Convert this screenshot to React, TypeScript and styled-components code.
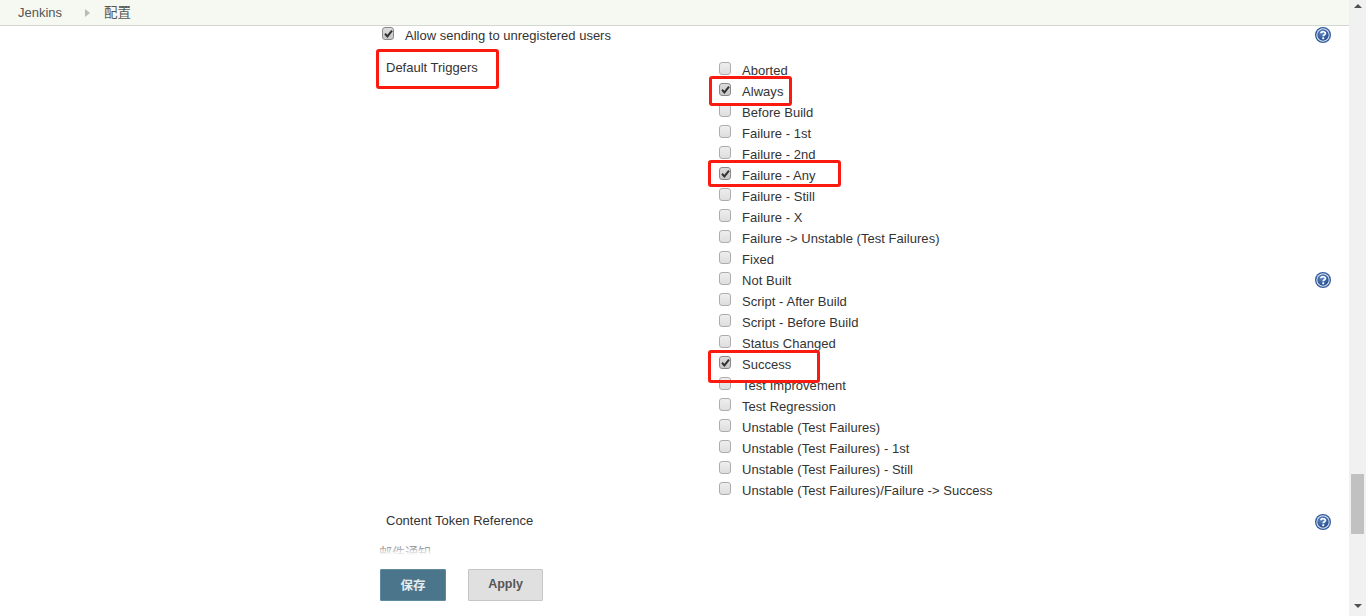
import React from "react";
import styled, { createGlobalStyle } from "styled-components";

const Global = createGlobalStyle`
  html, body { margin: 0; padding: 0; height: 100%; overflow: hidden; background: #fff; }
  body { font-family: "Liberation Sans", Arial, "Noto Sans CJK SC", sans-serif; font-size: 13px; color: #333; }
`;

const Shell = styled.div`
  display: flex;
  width: 1366px;
  height: 616px;
  overflow: hidden;
  position: relative;
`;
const Main = styled.div`
  flex: 1;
  display: flex;
  flex-direction: column;
  position: relative;
  min-width: 0;
`;
const TopBar = styled.header`
  height: 25px;
  flex: none;
  display: flex;
  align-items: center;
  padding-left: 18px;
  background: #f6f9f2;
  border-bottom: 1px solid #d3d7cf;
  color: #555;
`;
const Crumb = styled.span<{ $size?: number }>`
  font-size: ${(p) => p.$size ?? 13}px;
  line-height: 25px;
`;
const CrumbArrow = styled.span`
  width: 0;
  height: 0;
  margin: 0 14px 0 23px;
  border-left: 5px solid #b8bcb4;
  border-top: 4px solid transparent;
  border-bottom: 4px solid transparent;
`;
const Form = styled.form`
  display: flex;
  flex-direction: column;
  padding: 0 18px 0 380px;
  margin: 0;
`;
const AllowRow = styled.div`
  display: flex;
  align-items: center;
  height: 18px;
  padding-left: 2px;
  margin-bottom: 16px;
  line-height: 18px;
`;
const AllowText = styled.span`
  flex: 1;
  margin-left: 11px;
  padding-top: 2px;
`;
const TriggerSection = styled.div`
  display: grid;
  grid-template-columns: 339px 1fr 16px;
  align-items: start;
  min-height: 441px;
`;
const FieldLabel = styled.div`
  padding-left: 6px;
  line-height: 15px;
`;
const TriggerList = styled.ul`
  list-style: none;
  margin: -2px 0 0;
  padding: 0;
`;
const TriggerItem = styled.li`
  display: flex;
  align-items: center;
  height: 21px;
`;
const TriggerText = styled.span`
  margin-left: 11px;
  padding-top: 3px;
  white-space: nowrap;
  letter-spacing: 0.04px;
`;
const Box = styled.span<{ $checked?: boolean; $lift?: number }>`
  flex: none;
  width: 12px;
  height: 13px;
  box-sizing: border-box;
  border: 1px solid ${(p) => (p.$checked ? "#8a8a8a" : "#adadad")};
  border-radius: 3px;
  background: ${(p) => (p.$checked ? "linear-gradient(#dcdcdc, #c8c8c8)" : "linear-gradient(#eeeeee, #dedede)")};
  display: flex;
  align-items: center;
  justify-content: center;
  margin-top: ${(p) => -(p.$lift ?? 1)}px;
`;
const HelpSlot = styled.div`
  align-self: center;
  display: flex;
  height: 16px;
  margin-top: -2px;
`;
const TokenHelp = styled.div`
  display: flex;
  height: 16px;
  margin-top: 4px;
`;
const TokenRow = styled.div`
  display: flex;
  align-items: center;
  justify-content: space-between;
  height: 18px;
  margin-top: 10px;
`;
const SectionHeader = styled.div`
  margin: 16px 0 0 -1px;
  line-height: 15px;
  color: #888;
  font-size: 13px;
`;
const BottomBar = styled.div`
  position: absolute;
  left: 0;
  right: 0;
  bottom: 0;
  height: 69px;
  padding: 22px 0 0 380px;
  box-sizing: border-box;
  display: flex;
  align-items: flex-start;
  gap: 22px;
  background: linear-gradient(rgba(255, 255, 255, 0.1), #fff 8px);
  pointer-events: none;
`;
const Btn = styled.button<{ $primary?: boolean }>`
  font: bold 12.5px "Liberation Sans", Arial, "Noto Sans CJK SC", sans-serif;
  width: ${(p) => (p.$primary ? 66 : 75)}px;
  height: 32px;
  padding: 0 0 2px;
  border-radius: 1px;
  border: 1px solid ${(p) => (p.$primary ? "#5f8aa0" : "#c6c6c6")};
  background: ${(p) => (p.$primary ? "#4b758b" : "#e0e0e0")};
  color: ${(p) => (p.$primary ? "#e4ecf0" : "#555")};
`;
const ScrollTrack = styled.aside`
  flex: none;
  width: 17px;
  height: 616px;
  background: #f1f1f1;
  display: flex;
  flex-direction: column;
  align-items: center;
`;
const ArrowUp = styled.span`
  width: 0;
  height: 0;
  margin-top: 4px;
  border-left: 4px solid transparent;
  border-right: 4px solid transparent;
  border-bottom: 4px solid #505050;
`;
const Thumb = styled.span`
  width: 13px;
  height: 60px;
  margin-top: 466px;
  background: #c1c1c1;
`;
const ArrowDown = styled.span`
  width: 0;
  height: 0;
  margin-top: 70px;
  border-left: 4px solid transparent;
  border-right: 4px solid transparent;
  border-top: 4px solid #505050;
`;
const RedBox = styled.span<{ $x: number; $y: number; $w: number; $h: number }>`
  position: absolute;
  left: ${(p) => p.$x}px;
  top: ${(p) => p.$y}px;
  width: ${(p) => p.$w}px;
  height: ${(p) => p.$h}px;
  box-sizing: border-box;
  border: 3px solid #fb1a10;
  border-radius: 3px;
  pointer-events: none;
`;

const Check = () => (
  <svg width="9" height="9" viewBox="0 0 9 9">
    <path d="M1 4.8 L3.4 7.4 L8 1.6" fill="none" stroke="#333" strokeWidth="2" />
  </svg>
);
const CheckBox = ({ checked, lift }: { checked?: boolean; lift?: number }) => (
  <Box $checked={checked} $lift={lift}>{checked && <Check />}</Box>
);
const Help = () => (
  <svg width="16" height="16" viewBox="0 0 16 16">
    <defs>
      <radialGradient id="hg" cx="0.4" cy="0.3" r="0.8">
        <stop offset="0" stopColor="#5f88c0" />
        <stop offset="1" stopColor="#1f4688" />
      </radialGradient>
    </defs>
    <circle cx="8" cy="8" r="8" fill="#2f5a9e" />
    <circle cx="8" cy="8" r="6.7" fill="#dfe7f3" />
    <circle cx="8" cy="8" r="5.7" fill="url(#hg)" />
    <path d="M5.9 6.2 C5.9 4.2 10.4 4.2 10.4 6.4 C10.4 7.8 8.2 7.6 8.2 9.3" fill="none" stroke="#fff" strokeWidth="1.7" />
    <rect x="7.3" y="10.3" width="1.9" height="1.9" fill="#fff" />
  </svg>
);

const triggers: [string, boolean?][] = [
  ["Aborted"],
  ["Always", true],
  ["Before Build"],
  ["Failure - 1st"],
  ["Failure - 2nd"],
  ["Failure - Any", true],
  ["Failure - Still"],
  ["Failure - X"],
  ["Failure -> Unstable (Test Failures)"],
  ["Fixed"],
  ["Not Built"],
  ["Script - After Build"],
  ["Script - Before Build"],
  ["Status Changed"],
  ["Success", true],
  ["Test Improvement"],
  ["Test Regression"],
  ["Unstable (Test Failures)"],
  ["Unstable (Test Failures) - 1st"],
  ["Unstable (Test Failures) - Still"],
  ["Unstable (Test Failures)/Failure -> Success"],
];

export default function App() {
  return (
    <Shell>
      <Global />
      <Main>
        <TopBar>
          <Crumb>Jenkins</Crumb>
          <CrumbArrow />
          <Crumb $size={13.5}>配置</Crumb>
        </TopBar>
        <Form>
          <AllowRow>
            <CheckBox checked lift={3} />
            <AllowText>Allow sending to unregistered users</AllowText>
            <Help />
          </AllowRow>
          <TriggerSection>
            <FieldLabel>Default Triggers</FieldLabel>
            <TriggerList>
              {triggers.map(([name, checked]) => (
                <TriggerItem key={name}>
                  <CheckBox checked={checked} />
                  <TriggerText>{name}</TriggerText>
                </TriggerItem>
              ))}
            </TriggerList>
            <HelpSlot>
              <Help />
            </HelpSlot>
          </TriggerSection>
          <TokenRow>
            <FieldLabel>Content Token Reference</FieldLabel>
            <TokenHelp>
              <Help />
            </TokenHelp>
          </TokenRow>
          <SectionHeader>邮件通知</SectionHeader>
        </Form>
        <BottomBar>
          <Btn $primary>保存</Btn>
          <Btn>Apply</Btn>
        </BottomBar>
      </Main>
      <ScrollTrack>
        <ArrowUp />
        <Thumb />
        <ArrowDown />
      </ScrollTrack>
      <RedBox $x={376} $y={49} $w={123} $h={40} />
      <RedBox $x={709} $y={76} $w={83} $h={30} />
      <RedBox $x={708} $y={160} $w={133} $h={27} />
      <RedBox $x={708} $y={350} $w={112} $h={33} />
    </Shell>
  );
}
